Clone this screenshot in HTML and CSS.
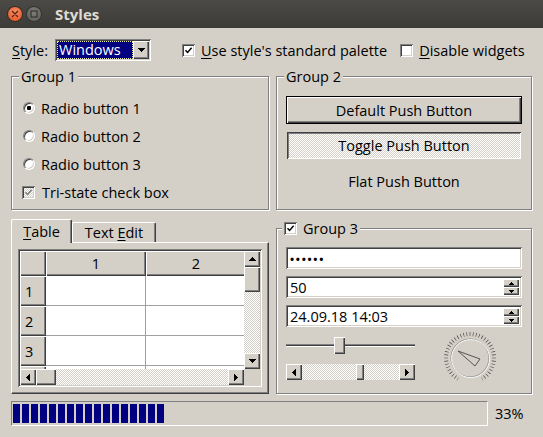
FILE: index.html
```html
<!DOCTYPE html>
<html lang="en">
<head>
<meta charset="utf-8">
<title>Styles</title>
<link rel="stylesheet" href="styles.css">
</head>
<body>
<div class="titlebar">
  <span class="wbtn wclose"><svg width="8" height="8" viewBox="0 0 8 8"><path d="M1.5 1.5l5 5M6.5 1.5l-5 5" stroke="#5a2412" stroke-width="1.4" stroke-linecap="round"/></svg></span>
  <span class="wbtn wmax"><svg width="8" height="8" viewBox="0 0 8 8"><rect x="1" y="1" width="6" height="6" fill="none" stroke="#393935" stroke-width="1.3"/></svg></span>
  <span class="wtitle">Styles</span>
</div>
<main class="content">
  <div class="toprow">
    <span class="stylelbl"><u>S</u>tyle:</span>
    <div class="combo sunken">
      <span class="combo-val">Windows</span>
      <span class="combo-btn raised"><svg width="7" height="4" viewBox="0 0 7 4" shape-rendering="crispEdges"><path d="M0 0h7v1H6v1H5v1H4v1H3V3H2V2H1V1H0z"/></svg></span>
    </div>
    <label class="check palette"><span class="cbox"><svg width="9" height="9" viewBox="0 0 9 9"><path d="M1.5 4.2L3.6 6.4L7.6 1.8" fill="none" stroke="#000" stroke-width="1.5"/></svg></span><span><u>U</u>se style's standard palette</span></label>
    <label class="check disable"><span class="cbox"></span><span><u>D</u>isable widgets</span></label>
  </div>

  <div class="panes">
    <section class="group g1">
      <div class="legend">Group 1</div>
      <div class="opt"><span class="radio on"></span><span>Radio button 1</span></div>
      <div class="opt"><span class="radio"></span><span>Radio button 2</span></div>
      <div class="opt"><span class="radio"></span><span>Radio button 3</span></div>
      <div class="opt"><span class="cbox tri"><svg width="9" height="9" viewBox="0 0 9 9"><path d="M1.5 4.2L3.6 6.4L7.6 1.8" fill="none" stroke="#808080" stroke-width="1.5"/></svg></span><span>Tri-state check box</span></div>
    </section>

    <section class="group g2">
      <div class="legend">Group 2</div>
      <div class="pbtn default">Default Push Button</div>
      <div class="pbtn toggle">Toggle Push Button</div>
      <div class="pbtn flat">Flat Push Button</div>
    </section>

    <section class="tabs">
      <div class="tabbar">
        <span class="tab active"><span><u>T</u>able</span></span>
        <span class="tab"><span>Text <u>E</u>dit</span></span>
      </div>
      <div class="tabpanel">
        <div class="tframe">
          <div class="tview">
            <div class="tgrid">
              <div class="hcell"></div><div class="hcell col">1</div><div class="hcell col">2</div>
              <div class="hcell rowh">1</div><div class="cell"></div><div class="cell"></div>
              <div class="hcell rowh">2</div><div class="cell"></div><div class="cell"></div>
              <div class="hcell rowh">3</div><div class="cell"></div><div class="cell"></div>
              <div class="hcell rowh"></div><div class="cell"></div><div class="cell"></div>
            </div>
          </div>
          <div class="vscroll">
            <span class="sbbtn raised"><svg width="7" height="4" viewBox="0 0 7 4" shape-rendering="crispEdges"><path d="M3 0h1v1h1v1h1v1h1v1H0V3h1V2h1V1h1z"/></svg></span>
            <span class="vthumb raised"></span>
            <span class="track"></span>
            <span class="sbbtn raised"><svg width="7" height="4" viewBox="0 0 7 4" shape-rendering="crispEdges"><path d="M0 0h7v1H6v1H5v1H4v1H3V3H2V2H1V1H0z"/></svg></span>
          </div>
          <div class="hscroll">
            <span class="sbbtn raised"><svg width="4" height="7" viewBox="0 0 4 7" shape-rendering="crispEdges"><path d="M3 0h1v7H3V6H2V5H1V4H0V3h1V2h1V1h1z"/></svg></span>
            <span class="hthumb raised"></span>
            <span class="track"></span>
            <span class="sbbtn raised"><svg width="4" height="7" viewBox="0 0 4 7" shape-rendering="crispEdges"><path d="M0 0h1v1h1v1h1v1h1v1H3v1H2v1H1v1H0z"/></svg></span>
          </div>
          <div class="sbcorner"></div>
        </div>
      </div>
    </section>

    <section class="group g3">
      <div class="legend"><span class="cbox"><svg width="9" height="9" viewBox="0 0 9 9"><path d="M1.5 4.2L3.6 6.4L7.6 1.8" fill="none" stroke="#000" stroke-width="1.5"/></svg></span><span>Group 3</span></div>
      <div class="field sunken pw">&#8226;&#8226;&#8226;&#8226;&#8226;&#8226;</div>
      <div class="field sunken spin">
        <span class="fval">50</span>
        <span class="spinbtns">
          <span class="sbtn raised"><svg width="5" height="3" viewBox="0 0 5 3" shape-rendering="crispEdges"><path d="M2 0h1v1h1v1h1v1H0V2h1V1h1z"/></svg></span>
          <span class="sbtn raised"><svg width="5" height="3" viewBox="0 0 5 3" shape-rendering="crispEdges"><path d="M0 0h5v1H4v1H3v1H2V2H1V1H0z"/></svg></span>
        </span>
      </div>
      <div class="field sunken spin">
        <span class="fval">24.09.18 14:03</span>
        <span class="spinbtns">
          <span class="sbtn raised"><svg width="5" height="3" viewBox="0 0 5 3" shape-rendering="crispEdges"><path d="M2 0h1v1h1v1h1v1H0V2h1V1h1z"/></svg></span>
          <span class="sbtn raised"><svg width="5" height="3" viewBox="0 0 5 3" shape-rendering="crispEdges"><path d="M0 0h5v1H4v1H3v1H2V2H1V1H0z"/></svg></span>
        </span>
      </div>
      <div class="lower">
        <div class="lcol">
          <div class="slider"><span class="handle raised"></span></div>
          <div class="hsb">
            <span class="sbbtn raised"><svg width="4" height="7" viewBox="0 0 4 7" shape-rendering="crispEdges"><path d="M3 0h1v7H3V6H2V5H1V4H0V3h1V2h1V1h1z"/></svg></span>
            <span class="track lefttrack"></span>
            <span class="hsbthumb raised"></span>
            <span class="track"></span>
            <span class="sbbtn raised"><svg width="4" height="7" viewBox="0 0 4 7" shape-rendering="crispEdges"><path d="M0 0h1v1h1v1h1v1h1v1H3v1H2v1H1v1H0z"/></svg></span>
          </div>
        </div>
        <svg class="dial" width="60" height="56" viewBox="0 0 60 56">
          <path d="M18 48.78 A24 24 0 1 1 42 48.78" fill="none" stroke="#404040" stroke-width="4" pathLength="40" stroke-dasharray="0.2 0.8" stroke-dashoffset="0.1"/>
          <circle cx="30" cy="28" r="19" fill="none" stroke="#8a8a8a" stroke-width="1"/>
          <circle cx="30.6" cy="28.6" r="19" fill="none" stroke="#fbfbfb" stroke-width="1"/>
          <polygon points="18,21 40,29 35,36" fill="none" stroke="#555" stroke-width="1"/>
        </svg>
      </div>
    </section>
  </div>

  <div class="progressrow">
    <div class="progress"><div class="chunks" style="width:153px"></div></div>
    <span class="pct">33%</span>
  </div>
</main>
</body>
</html>
```
FILE: styles.css
```css
* { box-sizing: border-box; }
html, body { margin: 0; padding: 0; }
body {
  width: 543px;
  height: 437px;
  overflow: hidden;
  background: #d4d0c8;
  color: #000;
  font-family: "Open Sans", "DejaVu Sans", sans-serif;
  font-size: 14.5px;
  line-height: 17px;
}
u { text-decoration-thickness: 1px; text-underline-offset: 2px; }

/* window title bar */
.titlebar {
  height: 28px;
  display: flex;
  align-items: center;
  padding-left: 8px;
  background: linear-gradient(#4b4a46, #3c3b37);
}
.wbtn {
  width: 14px;
  height: 14px;
  border-radius: 50%;
  display: flex;
  align-items: center;
  justify-content: center;
}
.wclose { background: radial-gradient(circle at 50% 35%, #f68d66, #e0501f); box-shadow: 0 0 0 1px #3a2a22; }
.wmax { margin-left: 5px; background: radial-gradient(circle at 50% 35%, #7e7d78, #5c5b57); box-shadow: 0 0 0 1px #34332f; }
.wtitle { margin-left: 14px; color: #dfdbd2; font-weight: bold; font-size: 15px; }

/* bevels */
.raised {
  background: #d4d0c8;
  box-shadow: inset 1px 1px #fff, inset -1px -1px #404040, inset -2px -2px #808080;
}
.sunken {
  background: #fff;
  box-shadow: inset 1px 1px #808080, inset -1px -1px #fff, inset 2px 2px #404040, inset -2px -2px #d4d0c8;
}
.track {
  flex: 1;
  background: repeating-conic-gradient(#fff 0 25%, #d4d0c8 0 50%) 0 0 / 2px 2px;
}

.content { padding: 11px 11px 0 11px; }

/* top row */
.toprow { display: flex; align-items: center; height: 22px; }
.stylelbl { margin-left: 1px; width: 43px; }
.combo {
  width: 96px;
  height: 22px;
  padding: 2px;
  display: flex;
}
.combo-val {
  flex: 1;
  background: #000080;
  color: #fff;
  padding-left: 2px;
  outline: 1px dotted #e8e8a0;
  outline-offset: -1px;
  line-height: 18px;
}
.combo-btn {
  width: 16px;
  display: flex;
  align-items: center;
  justify-content: center;
}
.check { display: flex; align-items: center; gap: 6px; }
.palette { margin-left: 31px; }
.disable { margin-left: 13px; }
.cbox {
  width: 13px;
  height: 13px;
  flex: none;
  display: inline-flex;
  align-items: center;
  justify-content: center;
  background: #fff;
  box-shadow: inset 1px 1px #808080, inset -1px -1px #fff, inset 2px 2px #404040, inset -2px -2px #d4d0c8;
}
.cbox.tri { background: repeating-conic-gradient(#fff 0 25%, #d4d0c8 0 50%) 0 0 / 2px 2px; }

/* layout of the panes */
.panes {
  margin-top: 15px;
  display: grid;
  grid-template-columns: 258px 256px;
  grid-template-rows: 134px 175px;
  column-gap: 7px;
  row-gap: 9px;
}
.group {
  position: relative;
  border: 1px solid #808080;
  box-shadow: inset 1px 1px #fff, 1px 1px #fff;
}
.legend {
  position: absolute;
  top: -9px;
  left: 7px;
  padding: 0 2px;
  background: #d4d0c8;
  display: flex;
  align-items: center;
  gap: 6px;
}

/* group 1 */
.g1 { padding: 21px 0 0 11px; display: flex; flex-direction: column; gap: 8px; }
.opt { height: 20px; display: flex; align-items: center; gap: 6px; }
.opt .cbox { margin-left: -1px; margin-right: 1px; }
.radio {
  width: 12px;
  height: 12px;
  flex: none;
  border-radius: 50%;
  background: #fff;
  border: 1px solid;
  border-color: #808080 #fff #fff #808080;
  box-shadow: inset 1px 1px #404040, inset -1px -1px #d4d0c8;
  display: flex;
  align-items: center;
  justify-content: center;
}
.radio.on::after {
  content: "";
  width: 4px;
  height: 4px;
  border-radius: 1px;
  background: #000;
}

/* group 2 */
.g2 { padding: 19px 9px 0 9px; display: flex; flex-direction: column; }
.pbtn { display: flex; align-items: center; justify-content: center; }
.default {
  height: 28px;
  border: 1px solid #000;
  background: #d4d0c8;
  box-shadow: inset 1px 1px #fff, inset -1px -1px #404040, inset -2px -2px #808080;
}
.toggle {
  height: 27px;
  margin: 8px 1px 0 1px;
  background: repeating-conic-gradient(#fff 0 25%, #d4d0c8 0 50%) 0 0 / 2px 2px;
  box-shadow: inset 1px 1px #404040, inset -1px -1px #fff, inset 2px 2px #808080;
}
.flat { height: 26px; margin-top: 9px; }

/* tabs */
.tabs { display: flex; flex-direction: column; }
.tabbar { height: 23px; display: flex; align-items: flex-end; }
.tab {
  height: 20px;
  display: flex;
  align-items: center;
  justify-content: center;
  border-top: 1px solid #fff;
  border-left: 1px solid #fff;
  border-right: 1px solid #404040;
  border-radius: 2px 2px 0 0;
  box-shadow: inset -1px 0 #808080;
  background: #d4d0c8;
}
.tab:first-child { width: 61px; }
.tab:last-child { width: 84px; }
.tab.active { height: 24px; margin-bottom: -1px; position: relative; z-index: 1; }
.tabpanel {
  height: 152px;
  padding: 6px;
  border: 1px solid;
  border-color: #fff #404040 #404040 #fff;
  box-shadow: inset -1px -1px #808080;
}
.tframe {
  width: 244px;
  height: 138px;
  padding: 2px;
  display: grid;
  grid-template-columns: 224px 16px;
  grid-template-rows: 118px 16px;
  background: #d4d0c8;
  box-shadow: inset 1px 1px #808080, inset -1px -1px #fff, inset 2px 2px #404040, inset -2px -2px #d4d0c8;
}
.tview { overflow: hidden; background: #fff; }
.tgrid {
  display: grid;
  grid-template-columns: 26px 100px 100px;
  grid-template-rows: 25px 30px 30px 30px 30px;
}
.hcell {
  background: #d4d0c8;
  box-shadow: inset 1px 1px #fff, inset -1px -1px #404040, inset -2px -2px #808080;
  display: flex;
  align-items: center;
}
.hcell.col { justify-content: center; }
.hcell.rowh { padding-left: 5px; }
.cell { border-right: 1px solid #a0a0a0; border-bottom: 1px solid #a0a0a0; }
.vscroll { display: flex; flex-direction: column; }
.hscroll { display: flex; }
.sbbtn {
  width: 16px;
  height: 16px;
  flex: none;
  display: flex;
  align-items: center;
  justify-content: center;
}
.vthumb { height: 25px; flex: none; }
.hthumb { width: 20px; flex: none; }
.sbcorner { background: #d4d0c8; }

/* group 3 */
.g3 { margin-top: 9px; padding: 18px 9px 0 9px; display: flex; flex-direction: column; gap: 7px; }
.g3 .legend { left: 5px; }
.field {
  height: 22px;
  padding: 2px 2px 2px 4px;
  display: flex;
  align-items: center;
}
.pw { font-size: 11px; letter-spacing: 1.7px; font-weight: bold; }
.fval { flex: 1; }
.spinbtns { display: flex; flex-direction: column; margin-right: 1px; }
.sbtn {
  width: 16px;
  height: 8px;
  display: flex;
  align-items: center;
  justify-content: center;
}
.lower { display: flex; margin-top: -4px; }
.lcol { width: 129px; display: flex; flex-direction: column; }
.slider {
  margin-top: 7px;
  height: 17px;
  display: flex;
  background: linear-gradient(#808080, #808080) 0 7px / 100% 1px no-repeat,
              linear-gradient(#404040, #404040) 0 8px / 100% 1px no-repeat,
              linear-gradient(#fff, #fff) 0 9px / 100% 1px no-repeat;
}
.handle { width: 11px; height: 17px; margin-left: 48px; }
.hsb { margin-top: 10px; height: 16px; display: flex; }
.lefttrack { flex: none; width: 54px; }
.hsbthumb { width: 8px; flex: none; }
.dial { margin-left: 25px; flex: none; }

/* progress */
.progressrow { margin-top: 7px; display: flex; align-items: center; }
.progress {
  width: 477px;
  height: 25px;
  padding: 2px 1px;
  border: 1px solid;
  border-color: #808080 #fff #fff #808080;
  display: flex;
}
.chunks { height: 100%; background: repeating-linear-gradient(90deg, #000080 0 7px, transparent 7px 9px); }
.pct { margin-left: 7px; }
```
